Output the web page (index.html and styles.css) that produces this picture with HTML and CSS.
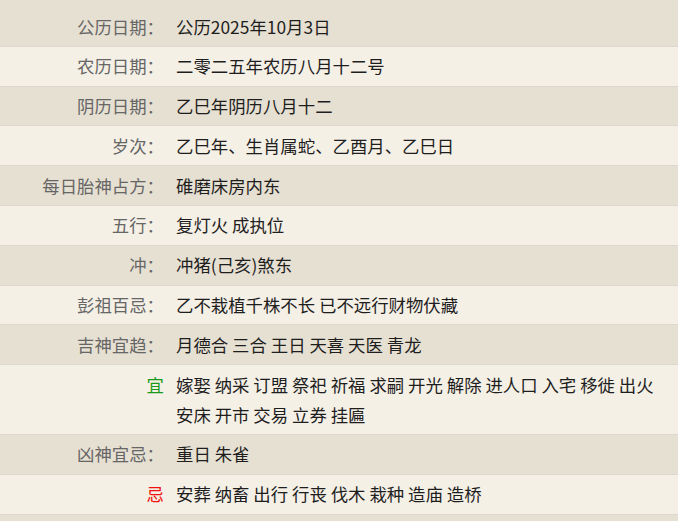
FILE: index.html
```html
<!DOCTYPE html>
<html lang="zh-CN">
<head>
<meta charset="utf-8">
<link rel="stylesheet" href="styles.css">
</head>
<body>
<div class="almanac">
  <div class="row dark"><div class="label">公历日期：</div><div class="value">公历2025年10月3日</div></div>
  <div class="row light"><div class="label">农历日期：</div><div class="value">二零二五年农历八月十二号</div></div>
  <div class="row dark"><div class="label">阴历日期：</div><div class="value">乙巳年阴历八月十二</div></div>
  <div class="row light"><div class="label">岁次：</div><div class="value">乙巳年、生肖属蛇、乙酉月、乙巳日</div></div>
  <div class="row dark"><div class="label">每日胎神占方：</div><div class="value">碓磨床房内东</div></div>
  <div class="row light"><div class="label">五行：</div><div class="value">复灯火 成执位</div></div>
  <div class="row dark"><div class="label">冲：</div><div class="value">冲猪(己亥)煞东</div></div>
  <div class="row light"><div class="label">彭祖百忌：</div><div class="value">乙不栽植千株不长 已不远行财物伏藏</div></div>
  <div class="row dark"><div class="label">吉神宜趋：</div><div class="value">月德合 三合 王日 天喜 天医 青龙</div></div>
  <div class="row light"><div class="label good">宜</div><div class="value">嫁娶 纳采 订盟 祭祀 祈福 求嗣 开光 解除 进人口 入宅 移徙 出火 安床 开市 交易 立券 挂匾</div></div>
  <div class="row dark"><div class="label">凶神宜忌：</div><div class="value">重日 朱雀</div></div>
  <div class="row light"><div class="label bad">忌</div><div class="value">安葬 纳畜 出行 行丧 伐木 栽种 造庙 造桥</div></div>
  <div class="row dark"><div class="label"></div><div class="value"></div></div>
</div>
</body>
</html>
```
FILE: styles.css
```css
html, body {
  margin: 0;
  padding: 0;
  background: #e6e0d2;
}
body {
  font-family: "Noto Sans CJK SC", "Noto Sans", sans-serif;
  font-size: 17.4px;
  color: #222;
  padding-top: 7px;
}
.almanac {
  display: flex;
  flex-direction: column;
}
.row {
  display: grid;
  grid-template-columns: 164px 1fr;
  column-gap: 12px;
  border-bottom: 1px solid #dcd8cf;
  line-height: 30px;
  padding: 4.5px 0 4.3px;
}
.row.dark { background: #e6e0d2; }
.row.light { background: #f5f0e6; }
.label {
  text-align: right;
  color: #666;
}
.label.good { color: #1a9a1a; }
.label.bad { color: #f01010; }
.value {
  color: #1e1e1e;
  padding-right: 12px;
}
```
